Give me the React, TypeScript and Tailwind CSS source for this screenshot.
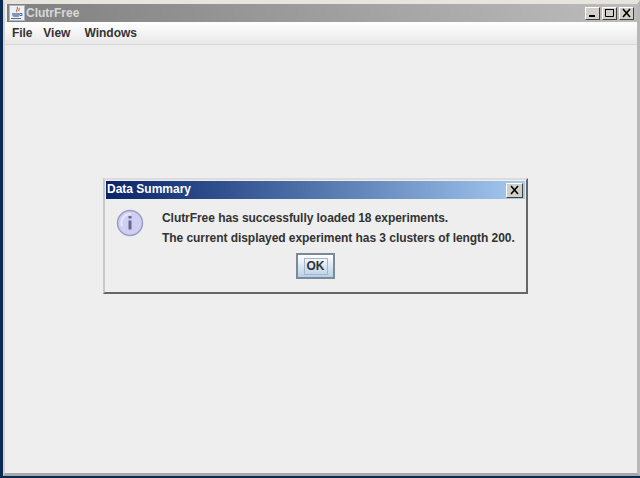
function JavaCup() {
  return (
    <svg width="16" height="16" viewBox="0 0 16 16">
      <rect x="0.5" y="0.5" width="15" height="15" fill="#eef0f4" stroke="#aeb4c4" />
      <path d="M8 2c2 2-2 3 0 5M10 3c1 1-1 2 0 3" fill="none" stroke="#c9704a" strokeWidth="1.2" />
      <path d="M3 8h8v1c0 2-1 3-2 3H5c-1 0-2-1-2-3z" fill="#7f97bd" />
      <path d="M11 8.500h2v2h-2M2 13.500h10" fill="none" stroke="#4d6a9c" />
    </svg>
  );
}

function InfoIcon() {
  return (
    <svg width="28" height="28" viewBox="0 0 28 28">
      <circle cx="14" cy="14" r="12.500" fill="#cfcff2" stroke="#9b9bce" strokeWidth="1.500" />
      <path d="M6 17a9 9 0 0 1 9-12" fill="none" stroke="#e8e8fb" strokeWidth="2" />
      <rect x="12.500" y="7" width="3" height="2.500" fill="#666690" />
      <rect x="12.500" y="11.500" width="3" height="9" fill="#666690" />
    </svg>
  );
}

function WinButton({ kind }: { kind: "min" | "max" | "close" }) {
  return (
    <div className="flex h-[13px] w-[15px] items-center justify-center border border-t-white border-l-white border-r-[#404040] border-b-[#404040] bg-[#d4d0c8]">
      <svg width="12" height="10" viewBox="0 0 12 10">
        {kind === "min" && <rect x="2" y="7" width="6" height="2" fill="#000" />}
        {kind === "max" && <path d="M1.500 1.500h8v7h-8zM1 1.500h9" fill="none" stroke="#000" />}
        {kind === "close" && <path d="M2 1l7 8M9 1l-7 8" fill="none" stroke="#000" strokeWidth="1.600" />}
      </svg>
    </div>
  );
}

export default function App() {
  return (
    <div className="relative flex h-[478px] w-[640px] flex-col overflow-hidden bg-[#0a2a52] pb-[2px] pl-[3px] font-['Liberation_Sans',Arial,sans-serif]">
      <div className="flex flex-1 flex-col border-b-[3px] border-r-[3px] border-t-[4px] border-l-[2px] border-b-[#a8a8a8] border-l-[#d4d2ca] border-r-[#b8b8b8] border-t-[#e6e4dc] bg-[#eeeeee]">
        <div className="ml-[2px] flex h-[18px] shrink-0 items-center gap-[2px] bg-gradient-to-r from-[#808080] to-[#bdbdbd] pr-[3px]">
          <div className="ml-[2px] mr-[-1px]">
            <JavaCup />
          </div>
          <span className="flex-1 text-[12px] font-bold text-[#d8d8d8]">ClutrFree</span>
          <WinButton kind="min" />
          <WinButton kind="max" />
          <WinButton kind="close" />
        </div>
        <div className="flex h-[23px] shrink-0 items-center gap-[11px] border-b border-[#d8d8d8] bg-gradient-to-b from-white to-[#e8e8e8] pl-[7px] text-[12px] font-bold text-[#333333]">
          <span className="tracking-[-0.1px]">File</span>
          <span>View</span>
          <span className="ml-[3px]">Windows</span>
        </div>
        <div className="flex-1" />
      </div>

      <div className="absolute left-[103px] top-[178px] flex h-[116px] w-[425px] flex-col border-[2px] border-t-[#dcdcdc] border-l-[#c8c8c8] border-r-[#666666] border-b-[#666666] bg-[#eeeeee] px-px pt-px">
        <div className="flex h-[18px] shrink-0 items-center justify-between bg-gradient-to-r from-[#0a246a] to-[#a6caf0] pr-[2px] pl-px">
          <span className="pb-[2px] text-[12px] font-bold text-white">Data Summary</span>
          <div className="flex h-[15px] w-[17px] items-center justify-center border border-t-white border-l-white border-r-[#404040] border-b-[#404040] bg-[#d4d0c8]">
            <svg width="12" height="10" viewBox="0 0 12 10">
              <path d="M2 1l7 8M9 1l-7 8" fill="none" stroke="#000" strokeWidth="1.600" />
            </svg>
          </div>
        </div>
        <div className="flex pl-[10px] pt-[10px]">
          <InfoIcon />
          <div className="ml-[18px] flex flex-col gap-[4px] pt-px text-[12px] font-bold leading-[16px] tracking-[-0.055px] text-[#333333]">
            <span>ClutrFree has successfully loaded 18 experiments.</span>
            <span>The current displayed experiment has 3 clusters of length 200.</span>
          </div>
        </div>
        <div className="flex justify-center pt-[7px]">
          <button className="flex h-[26px] w-[39px] items-center justify-center border-[2px] border-[#7a8a99] bg-gradient-to-b from-white to-[#b8cfe5]">
            <span className="border border-[#a3b8cc] px-[2px] text-[12px] font-bold leading-[15px] text-[#333333]">OK</span>
          </button>
        </div>
      </div>
    </div>
  );
}
